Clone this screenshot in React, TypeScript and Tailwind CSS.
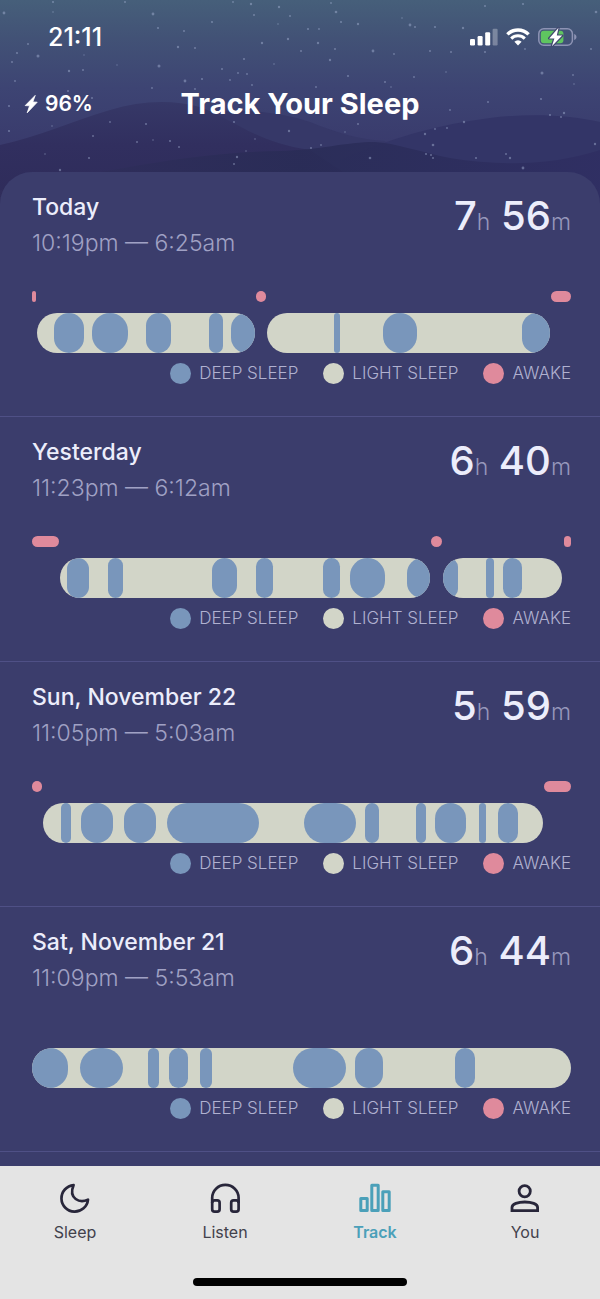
type Span = [start: number, end: number];

interface Session {
  span: Span;
  deep: Span[];
}

interface Night {
  id: string;
  title: string;
  range: string;
  hours: number;
  minutes: number;
  awake: Span[];
  sessions: Session[];
}

// every night is sampled into the same number of slots
const NIGHT: Span = [0, 539];

const NIGHTS: Night[] = [
  {
    id: "today",
    title: "Today",
    range: "10:19pm — 6:25am",
    hours: 7,
    minutes: 56,
    awake: [[0, 4], [224, 234], [519, 539]],
    sessions: [
      { span: [5, 223], deep: [[22, 52], [60, 96], [114, 139], [177, 191], [199, 230]] },
      { span: [235, 518], deep: [[302, 308], [351, 385], [490, 519]] },
    ],
  },
  {
    id: "yesterday",
    title: "Yesterday",
    range: "11:23pm — 6:12am",
    hours: 6,
    minutes: 40,
    awake: [[0, 27], [399, 410], [532, 539]],
    sessions: [
      {
        span: [28, 398],
        deep: [[35, 57], [76, 91], [180, 205], [224, 241], [291, 308], [318, 353], [375, 405]],
      },
      { span: [411, 530], deep: [[408, 426], [454, 462], [471, 490]] },
    ],
  },
  {
    id: "nov-22",
    title: "Sun, November 22",
    range: "11:05pm — 5:03am",
    hours: 5,
    minutes: 59,
    awake: [[0, 10], [512, 539]],
    sessions: [
      {
        span: [11, 511],
        deep: [
          [29, 39], [49, 81], [92, 124], [135, 227], [272, 324],
          [333, 347], [384, 394], [403, 434], [447, 454], [466, 486],
        ],
      },
    ],
  },
  {
    id: "nov-21",
    title: "Sat, November 21",
    range: "11:09pm — 5:53am",
    hours: 6,
    minutes: 44,
    awake: [],
    sessions: [
      {
        span: [0, 539],
        deep: [
          [0, 36], [48, 91], [116, 127], [137, 156], [168, 180],
          [261, 314], [323, 351], [423, 443],
        ],
      },
    ],
  },
];

const LEGEND = [
  { label: "DEEP SLEEP", color: "bg-[#7996bb]" },
  { label: "LIGHT SLEEP", color: "bg-[#d2d5c8]" },
  { label: "AWAKE", color: "bg-[#df8a9c]" },
];

const STARS: [number, number, number][] = [
  [4, 13, 1.4], [53, 2, 1.1], [53, 12, 0.8], [125, 2, 1], [153, 14, 1.4], [158, 28, 1.1],
  [28, 44, 1], [17, 53, 1.1], [38, 56, 1.5], [12, 62, 1], [69, 71, 1.2], [83, 70, 1],
  [84, 55, 0.7], [15, 81, 0.9], [117, 65, 0.7], [159, 66, 1.5], [178, 47, 1.2], [195, 48, 1],
  [184, 31, 1], [212, 22, 1.1], [233, 2, 0.9], [251, 4, 1.2], [254, 15, 1], [279, 7, 1.2],
  [290, 16, 1], [278, 24, 0.8], [262, 43, 1.2], [288, 39, 1.2], [244, 59, 1.1], [222, 69, 1],
  [238, 73, 0.9], [247, 74, 0.9], [230, 80, 0.9], [202, 79, 1.1], [185, 81, 1.4], [252, 85, 0.9],
  [274, 64, 0.8], [195, 89, 0.9], [9, 106, 1.1], [68, 91, 1], [92, 98, 1], [152, 88, 0.9],
  [9, 131, 1.1], [52, 126, 0.8], [110, 122, 0.9], [93, 136, 1], [146, 124, 1.1], [137, 142, 1],
  [153, 140, 0.8], [170, 141, 1.1], [179, 147, 1], [89, 158, 1.1], [60, 170, 1.2], [45, 154, 0.8],
  [234, 122, 1.1], [289, 131, 1.2], [255, 139, 0.8], [237, 157, 1.2], [234, 164, 1], [246, 151, 0.8],
  [336, 12, 1.3], [331, 3, 0.9], [308, 29, 1.1], [319, 29, 0.9], [341, 22, 1.1], [358, 24, 1.2],
  [402, 18, 0.8], [410, 25, 1.4], [415, 27, 1], [435, 27, 1.1], [463, 28, 1.2], [485, 6, 1],
  [523, 4, 1.1], [596, 12, 1.3], [318, 43, 1.2], [301, 51, 1], [335, 49, 1], [330, 60, 1.2],
  [373, 51, 1.4], [394, 54, 0.9], [430, 51, 1], [451, 52, 1], [485, 52, 1.1], [525, 49, 0.9],
  [591, 49, 1], [542, 73, 1.5], [573, 75, 0.9], [348, 76, 1.1], [385, 82, 1], [391, 87, 0.8],
  [414, 77, 0.9], [446, 72, 0.8], [316, 87, 0.9], [541, 99, 1.1], [488, 102, 1], [564, 113, 1.2],
  [561, 117, 1], [550, 115, 1.1], [450, 110, 0.9], [464, 122, 1.2], [435, 129, 0.9], [425, 134, 1.2],
  [447, 128, 0.9], [345, 132, 0.8], [358, 124, 1], [433, 145, 1.3], [426, 154, 1.1], [431, 155, 1],
  [433, 158, 1], [370, 158, 1.3], [311, 148, 1], [321, 145, 0.9], [476, 158, 1.1], [506, 154, 1],
  [510, 158, 1.2], [523, 168, 1.4], [595, 144, 1.2], [574, 84, 0.8],
];

function NightSky() {
  return (
    <svg
      aria-hidden="true"
      viewBox="0 0 600 210"
      preserveAspectRatio="none"
      className="absolute inset-0 h-full w-full"
    >
      <defs>
        <linearGradient id="sky" x1="0" y1="0" x2="0" y2="1">
          <stop offset="0" stopColor="#465f7a" />
          <stop offset="0.18" stopColor="#425276" />
          <stop offset="0.42" stopColor="#3d4473" />
          <stop offset="0.8" stopColor="#38376a" />
        </linearGradient>
        <linearGradient id="ridge" x1="0" y1="0" x2="0" y2="1">
          <stop offset="0" stopColor="#363867" />
          <stop offset="0.4" stopColor="#312f5f" />
          <stop offset="1" stopColor="#2e2b59" />
        </linearGradient>
        <linearGradient id="front" x1="0" y1="0" x2="1" y2="0">
          <stop offset="0" stopColor="#312e5c" />
          <stop offset="0.5" stopColor="#292c56" />
          <stop offset="1" stopColor="#2f2e62" />
        </linearGradient>
      </defs>
      <rect width="600" height="210" fill="url(#sky)" />
      <path
        d="M160 130C200 104 270 108 310 122C335 132 360 140 385 141L420 210H160Z"
        fill="#363868"
      />
      <path
        d="M340 160C390 138 440 124 490 118C530 113 570 115 600 122V210H340Z"
        fill="#333567"
      />
      <path
        d="M0 145C40 136 70 122 110 110C140 101 170 99 200 107C235 120 255 142 310 150L400 210H0Z"
        fill="url(#ridge)"
      />
      <path
        d="M0 190C80 178 180 152 280 151C320 150 345 142 375 142C395 143 420 152 450 158C500 166 550 166 600 150V210H0Z"
        fill="url(#front)"
        opacity="0.85"
      />
      {STARS.map(([x, y, r]) => (
        <circle key={`${x}-${y}`} cx={x} cy={y} r={r} fill="#a9b6d8" opacity="0.45" />
      ))}
    </svg>
  );
}

function SignalIcon() {
  return (
    <svg aria-hidden="true" viewBox="0 0 28 18" className="h-[18px] w-7" fill="#fff">
      <rect x="0" y="11" width="5" height="6.5" rx="1.2" />
      <rect x="7.6" y="8" width="5" height="9.5" rx="1.2" />
      <rect x="15.2" y="4.2" width="5" height="13.3" rx="1.2" />
      <rect x="22.6" y="0.8" width="5" height="16.7" rx="1.2" opacity="0.3" />
    </svg>
  );
}

function WifiIcon() {
  return (
    <svg aria-hidden="true" viewBox="0 0 24 18" className="h-[18px] w-6" fill="none" stroke="#fff">
      <path d="M1.4 6.4a15 15 0 0 1 21.2 0" strokeWidth="3.4" />
      <path d="M5.2 10.6a9.5 9.5 0 0 1 13.6 0" strokeWidth="3" />
      <path d="M8.4 13.8a5 5 0 0 1 7.2 0L12 17.6Z" fill="#fff" stroke="none" />
    </svg>
  );
}

function BatteryIcon() {
  return (
    <svg aria-hidden="true" viewBox="0 0 39 20" className="h-5 w-[39px]">
      <rect x="0.8" y="1.7" width="33.6" height="16.6" rx="5" fill="none" stroke="#8d93b4" strokeWidth="1.5" />
      <path d="M36.2 7v6c3-1 3-5 0-6Z" fill="#8d93b4" />
      <rect x="2.8" y="3.8" width="22.6" height="12.4" rx="3" fill="#5fc560" />
      <path
        d="M20.5 0.8L11.2 11.4h5.2L13.9 19.2L24.2 8.6h-5.4Z"
        fill="#fff"
        stroke="#40486f"
        strokeWidth="2.4"
        strokeLinejoin="round"
        paintOrder="stroke"
      />
    </svg>
  );
}

function BoltIcon() {
  return (
    <svg
      aria-hidden="true"
      viewBox="0 0 14 20"
      className="h-5 w-3.5"
      fill="#fff"
      stroke="#fff"
      strokeWidth="0.8"
      strokeLinejoin="round"
    >
      <path d="M11.2 1.4L1.2 11.6L5.6 11.8L3.2 18.8L13.2 8.2L8.8 8Z" />
    </svg>
  );
}

function MoonIcon() {
  return (
    <path
      d="M14.6 3.1A13.3 13.3 0 1 0 29 17.6C21 21.5 9 17 14.6 3.1Z"
      strokeWidth="2.7"
      strokeLinejoin="round"
    />
  );
}

function HeadphonesIcon() {
  return (
    <g strokeWidth="2.7">
      <path d="M3.2 21V15.8a13.2 12.9 0 0 1 26.4 0V21" />
      <rect x="3.2" y="18.4" width="7.4" height="11.2" rx="2.4" />
      <rect x="22.2" y="18.4" width="7.4" height="11.2" rx="2.4" />
    </g>
  );
}

function ChartIcon() {
  return (
    <g strokeWidth="3" strokeLinejoin="round">
      <rect x="1.8" y="16.6" width="6.4" height="11.8" />
      <rect x="12.8" y="3.2" width="6.4" height="25.2" />
      <rect x="23.8" y="9.8" width="6.4" height="18.6" />
    </g>
  );
}

function PersonIcon() {
  return (
    <g strokeWidth="2.8">
      <circle cx="15.7" cy="9.2" r="5.6" />
      <path d="M3 28.7V25.4C3 22 9 20 15.8 20S28.6 22 28.6 25.4V28.7Z" />
    </g>
  );
}

const TABS = [
  { label: "Sleep", href: "#sleep", icon: MoonIcon },
  { label: "Listen", href: "#listen", icon: HeadphonesIcon },
  { label: "Track", href: "#track", icon: ChartIcon, active: true },
  { label: "You", href: "#you", icon: PersonIcon },
];

// margin and width of a span, as a share of the range it sits in
function spanStyle(span: Span, prevEnd: number, range: Span) {
  const length = range[1] - range[0];
  return {
    marginLeft: `${((span[0] - prevEnd) / length) * 100}%`,
    width: `${((span[1] - span[0]) / length) * 100}%`,
  };
}

function Timeline({ night }: { night: Night }) {
  const { awake, sessions } = night;
  return (
    <div className="mt-[33px] flex flex-col gap-[11px]">
      <div className="flex h-[11px]">
        {awake.map((span, i) => (
          <div
            key={span[0]}
            className="shrink-0 rounded-full bg-[#df8a9c]"
            style={spanStyle(span, i ? awake[i - 1][1] : NIGHT[0], NIGHT)}
          />
        ))}
      </div>
      <div className="flex h-10">
        {sessions.map(({ span, deep }, i) => (
          <div
            key={span[0]}
            className="flex shrink-0 overflow-hidden rounded-full bg-[#d2d5c8]"
            style={spanStyle(span, i ? sessions[i - 1].span[1] : NIGHT[0], NIGHT)}
          >
            {deep.map((d, j) => (
              <div
                key={d[0]}
                className="shrink-0 rounded-full bg-[#7996bb]"
                style={spanStyle(d, j ? deep[j - 1][1] : span[0], span)}
              />
            ))}
          </div>
        ))}
      </div>
    </div>
  );
}

function NightCard({ night }: { night: Night }) {
  return (
    <section className="border-b border-[#4f5086] pt-5 pr-[29px] pb-8 pl-8">
      <div className="flex justify-between">
        <div>
          <h2 className="text-[23px] leading-[30px] font-medium text-[#ecedfb]">{night.title}</h2>
          <p className="mt-1.5 text-[23px] leading-[30px] font-light text-[#a0a1c4]">
            {night.range}
          </p>
        </div>
        <p className="text-[40px] leading-[48px] font-medium text-[#ecedfb]">
          {night.hours}
          <span className="text-[23px] font-light text-[#9697bb]">h</span> {night.minutes}
          <span className="text-[23px] font-light text-[#9697bb]">m</span>
        </p>
      </div>
      <Timeline night={night} />
      <ul className="mt-2.5 flex justify-end gap-[25px]">
        {LEGEND.map((item) => (
          <li key={item.label} className="flex items-center gap-2">
            <span className={`size-[21px] rounded-full ${item.color}`} />
            <span className="text-[17px] leading-[21px] font-light text-[#b0b1d0]">
              {item.label}
            </span>
          </li>
        ))}
      </ul>
    </section>
  );
}

function TabBar() {
  return (
    <nav className="relative bg-[#e4e4e4] pt-4 pb-[13px]">
      <div className="grid grid-cols-4">
        {TABS.map(({ label, href, icon: Icon, active }) => (
          <a
            key={label}
            href={href}
            aria-current={active ? "page" : undefined}
            className={`flex flex-col items-center gap-2 ${active ? "text-[#4ba0b9]" : "text-[#28263a]"}`}
          >
            <svg
              aria-hidden="true"
              viewBox="0 0 32 32"
              className="size-8"
              fill="none"
              stroke="currentColor"
            >
              <Icon />
            </svg>
            <span className={`text-[16px] leading-5 ${active ? "font-semibold" : "text-[#42414c]"}`}>
              {label}
            </span>
          </a>
        ))}
      </div>
      <div className="mx-auto mt-9 h-2 w-[214px] rounded-full bg-black" />
    </nav>
  );
}

export default function App() {
  return (
    <div className="relative flex min-h-screen flex-col bg-[#3b3d6c] font-['Inter','Liberation_Sans',sans-serif]">
      <div className="absolute inset-x-0 top-0 h-[210px]">
        <NightSky />
      </div>

      <header className="relative pt-5 pb-12 text-white">
        <div className="flex h-[34px] items-center justify-between pr-[23px] pl-12">
          <span className="text-[25px] leading-[34px] font-medium">21:11</span>
          <div className="flex items-center gap-2">
            <SignalIcon />
            <WifiIcon />
            <BatteryIcon />
          </div>
        </div>
        <div className="mt-[30px] grid h-10 grid-cols-[1fr_auto_1fr] items-center px-6">
          <span className="flex items-center gap-[7px] text-[21px] font-semibold">
            <BoltIcon />
            96%
          </span>
          <h1 className="text-[29px] leading-10 font-bold">Track Your Sleep</h1>
        </div>
      </header>

      <main className="relative flex-1 rounded-t-[32px] bg-[#3b3d6c]">
        {NIGHTS.map((night) => (
          <NightCard key={night.id} night={night} />
        ))}
      </main>

      <TabBar />
    </div>
  );
}
